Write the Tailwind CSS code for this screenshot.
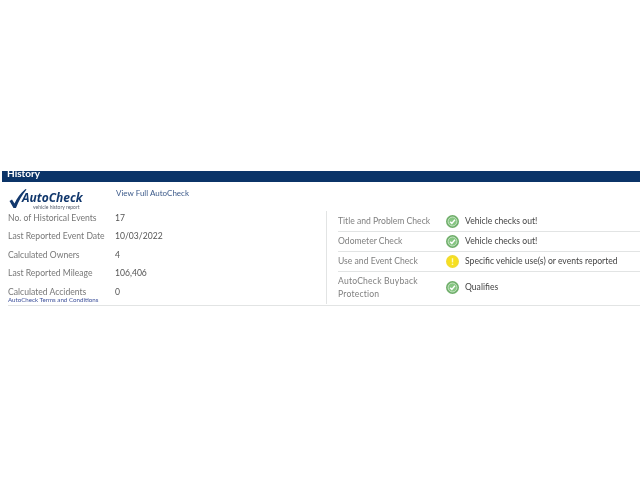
<!DOCTYPE html>
<html lang="en">
<head>
    <meta charset="UTF-8">
    <title>History</title>
    <script src="https://cdn.jsdelivr.net/npm/@tailwindcss/browser@4"></script>
</head>
<body class="bg-white w-[640px] h-[480px] overflow-hidden font-['Lato','Noto_Sans',sans-serif]">
    <div class="pt-[171px] blur-[0.35px]">
        <!-- Header bar -->
        <div class="ml-[2px] h-[11px] bg-[#0b3468] pl-[5px] overflow-visible">
            <div class="text-[10px] leading-[11px] font-bold text-white -translate-y-[3px]">History</div>
        </div>

        <div class="ml-[8px] h-[124px] border-b border-[#e2e4e4] flex">
            <!-- Left: summary -->
            <div class="w-[318px] shrink-0">
                <div class="flex h-[27px] pt-[5px]">
                    <div class="w-[108px] relative">
                        <svg class="absolute left-[1px] top-[1px]" width="76" height="25" viewBox="0 0 76 25">
                            <path d="M0.5 13 L3 11.5 L5.5 15.5 C8 10 11.5 5 16.5 1 L17.5 1.5 C13 7 9.5 13 7 20 L4.5 20 Z" fill="#12386d"/>
                        </svg>
                        <span class="absolute left-[14px] top-[5px] text-[12px] leading-[12px] font-bold italic text-[#12386d] font-['Open_Sans',sans-serif]">AutoCheck</span>
                        <span class="absolute left-[25px] top-[18px] text-[5px] leading-[4px] text-[#555e6e] whitespace-nowrap">vehicle history report</span>
                    </div>
                    <a class="text-[8px] leading-[12px] text-[#3c5a8a]">View Full AutoCheck</a>
                </div>
                <div class="flex h-[18.5px] items-center text-[8.6px] text-[#777]"><div class="w-[107px]">No. of Historical Events</div><div class="text-[#555]">17</div></div>
                <div class="flex h-[18.5px] items-center text-[8.6px] text-[#777]"><div class="w-[107px] whitespace-nowrap">Last Reported Event Date</div><div class="text-[#555]">10/03/2022</div></div>
                <div class="flex h-[18.5px] items-center text-[8.6px] text-[#777]"><div class="w-[107px]">Calculated Owners</div><div class="text-[#555]">4</div></div>
                <div class="flex h-[18.5px] items-center text-[8.6px] text-[#777]"><div class="w-[107px]">Last Reported Mileage</div><div class="text-[#555]">106,406</div></div>
                <div class="flex h-[17px] items-center text-[8.6px] leading-[10px] text-[#777]"><div class="w-[107px]">Calculated Accidents</div><div class="text-[#555]">0</div></div>
                <a class="block text-[6.2px] leading-[6px] -mt-[3px] text-[#3b4f9a] whitespace-nowrap">AutoCheck Terms and Conditions</a>
            </div>

            <!-- Right: checks -->
            <div class="flex-1 mt-[29px] mb-[1px] border-l border-[#e2e4e4] pl-[11px] text-[8.6px]">
                <div class="flex items-center h-[21px] border-b border-[#e2e4e4]">
                    <div class="w-[108px] text-[#808080]">Title and Problem Check</div>
                    <svg width="13" height="13" viewBox="0 0 14 14"><circle cx="7" cy="7" r="7" fill="#6fae6a"/><circle cx="7" cy="7" r="4.8" fill="#86c682" stroke="#dcefda" stroke-width="0.8"/><path d="M4.5 7.2 L6.3 9 L9.6 5.2" fill="none" stroke="#fff" stroke-width="1.5"/></svg>
                    <div class="ml-[6px] text-[#444]">Vehicle checks out!</div>
                </div>
                <div class="flex items-center h-[20px] border-b border-[#e2e4e4]">
                    <div class="w-[108px] text-[#808080]">Odometer Check</div>
                    <svg width="13" height="13" viewBox="0 0 14 14"><circle cx="7" cy="7" r="7" fill="#6fae6a"/><circle cx="7" cy="7" r="4.8" fill="#86c682" stroke="#dcefda" stroke-width="0.8"/><path d="M4.5 7.2 L6.3 9 L9.6 5.2" fill="none" stroke="#fff" stroke-width="1.5"/></svg>
                    <div class="ml-[6px] text-[#444]">Vehicle checks out!</div>
                </div>
                <div class="flex items-center h-[20px] border-b border-[#e2e4e4]">
                    <div class="w-[108px] text-[#808080]">Use and Event Check</div>
                    <svg width="13" height="13" viewBox="0 0 14 14"><circle cx="7" cy="7" r="7" fill="#f2dc2e"/><circle cx="7" cy="7" r="5" fill="#f7e01f"/><path d="M7 3.5 V8" stroke="#fff8c0" stroke-width="1.5"/><circle cx="7" cy="10" r="0.9" fill="#fff8c0"/></svg>
                    <div class="ml-[6px] text-[#444]">Specific vehicle use(s) or events reported</div>
                </div>
                <div class="flex items-center h-[31px]">
                    <div class="w-[108px] text-[#808080] leading-[12.5px] tracking-[0.2px]">AutoCheck Buyback<br>Protection</div>
                    <svg width="13" height="13" viewBox="0 0 14 14"><circle cx="7" cy="7" r="7" fill="#6fae6a"/><circle cx="7" cy="7" r="4.8" fill="#86c682" stroke="#dcefda" stroke-width="0.8"/><path d="M4.5 7.2 L6.3 9 L9.6 5.2" fill="none" stroke="#fff" stroke-width="1.5"/></svg>
                    <div class="ml-[6px] text-[#444]">Qualifies</div>
                </div>
            </div>
        </div>
    </div>
</body>
</html>
